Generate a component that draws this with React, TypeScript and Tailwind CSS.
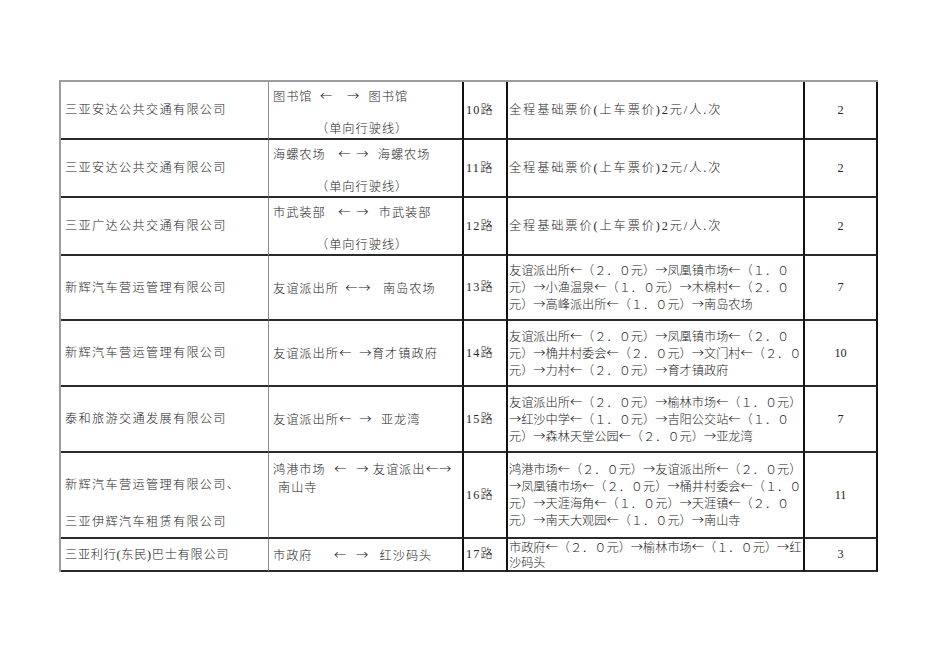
const serif = "font-['Liberation_Serif','Noto_Sans_CJK_SC',serif]";
const cjk = "font-['Noto_Sans_CJK_SC','Liberation_Serif',sans-serif]";

// route text: strings are text, numbers are gaps in px, '←' / '→' are arrow cells
type Part = string | number;

type Row = {
  company: string[];
  route: Part[][];
  routeTop: boolean;
  line: string;
  detail: string[];
  detailCjk: boolean;
  count: string;
};

const price = ['全程基础票价(上车票价)2元/人.次'];

const rows: Row[] = [
  { company: ['三亚安达公共交通有限公司'], route: [['图书馆', 7, '←', 14, '→', 9, '图书馆'], ['（单向行驶线）']], routeTop: true, line: '10路', detail: price, detailCjk: false, count: '2' },
  { company: ['三亚安达公共交通有限公司'], route: [['海螺农场', 12, '←', 5, '→', 9, '海螺农场'], ['（单向行驶线）']], routeTop: true, line: '11路', detail: price, detailCjk: false, count: '2' },
  { company: ['三亚广达公共交通有限公司'], route: [['市武装部', 12, '←', 5, '→', 10, '市武装部'], ['（单向行驶线）']], routeTop: true, line: '12路', detail: price, detailCjk: false, count: '2' },
  {
    company: ['新辉汽车营运管理有限公司'],
    route: [['友谊派出所', 6, '←', '→', 12, '南岛农场']],
    routeTop: false,
    line: '13路',
    detail: ['友谊派出所←（２．０元）→凤凰镇市场←（１．０', '元）→小渔温泉←（１．０元）→木棉村←（２．０', '元）→高峰派出所←（１．０元）→南岛农场'],
    detailCjk: true,
    count: '7',
  },
  {
    company: ['新辉汽车营运管理有限公司'],
    route: [['友谊派出所', '←', 7, '→', '育才镇政府']],
    routeTop: false,
    line: '14路',
    detail: ['友谊派出所←（２．０元）→凤凰镇市场←（２．０', '元）→桷井村委会←（２．０元）→文门村←（２．０', '元）→力村←（２．０元）→育才镇政府'],
    detailCjk: true,
    count: '10',
  },
  {
    company: ['泰和旅游交通发展有限公司'],
    route: [['友谊派出所', '←', 7, '→', 9, '亚龙湾']],
    routeTop: false,
    line: '15路',
    detail: ['友谊派出所←（２．０元）→榆林市场←（１．０元）', '→红沙中学←（１．０元）→吉阳公交站←（１．０', '元）→森林天堂公园←（２．０元）→亚龙湾'],
    detailCjk: true,
    count: '7',
  },
  {
    company: ['新辉汽车营运管理有限公司、', '三亚伊辉汽车租赁有限公司'],
    route: [['鸿港市场', 8, '←', 9, '→', 4, '友谊派出', '←', '→'], [5, '南山寺']],
    routeTop: true,
    line: '16路',
    detail: ['鸿港市场←（２．０元）→友谊派出所←（２．０元）', '→凤凰镇市场←（２．０元）→桶井村委会←（１．０', '元）→天涯海角←（１．０元）→天涯镇←（２．０', '元）→南天大观园←（１．０元）→南山寺'],
    detailCjk: true,
    count: '11',
  },
  {
    company: ['三亚利行(东民)巴士有限公司'],
    route: [['市政府', 21, '←', 9, '→', 11, '红沙码头']],
    routeTop: false,
    line: '17路',
    detail: ['市政府←（２．０元）→榆林市场←（１．０元）→红', '沙码头'],
    detailCjk: true,
    count: '3',
  },
];

const heights = ['h-[58px]', 'h-[58px]', 'h-[58px]', 'h-[65px]', 'h-[66px]', 'h-[66px]', 'h-[86px]', 'h-[33px]'];

function RouteLine({ parts, indent }: { parts: Part[]; indent: boolean }) {
  return (
    <div className={`flex items-center ${indent ? 'pl-[43px]' : ''}`}>
      {parts.map((p, k) => {
        if (typeof p === 'number') return <span key={k} className="inline-block shrink-0" style={{ width: p }} />;
        if (p === '←' || p === '→')
          return (
            <span key={k} className="inline-block w-[13px] shrink-0 text-center tracking-normal">
              {p}
            </span>
          );
        return <span key={k}>{p}</span>;
      })}
    </div>
  );
}

export default function App() {
  return (
    <div className="min-h-screen bg-white pt-[80px] pl-[59px] text-[12.2px] font-light text-[#262626]">
      <div className="grid w-[819px] grid-cols-[208px_195px_44px_297px_73px] border-t-2 border-l-2 border-[#9c9c9c]">
        {rows.map((r, i) => {
          const cell = `${heights[i]} border-b-2 border-b-[#2a2a2a]`;
          const twoLine = r.route.length > 1;
          const isMarket = i === 6;
          const last = i === 7;
          return (
            <div key={i} className="contents">
              {/* operator */}
              <div className={`${cell} border-r border-r-[#8c8c8c] ${serif} ${last ? 'tracking-[0.7px]' : 'tracking-[1.3px]'} leading-[16px] pl-[4px] flex flex-col ${r.company.length > 1 ? 'pt-[24px] gap-[21px]' : 'justify-center'} whitespace-nowrap`}>
                {r.company.map((t, j) => (
                  <div key={j}>{t}</div>
                ))}
              </div>
              {/* route ends */}
              <div className={`${cell} border-r-2 border-r-[#111] ${cjk} tracking-[1px] leading-[16px] pl-[4px] flex flex-col whitespace-nowrap ${twoLine ? (isMarket ? 'pt-[8px] gap-[2px]' : 'pt-[6px] gap-[16px]') : 'justify-center'}`}>
                {r.route.map((parts, j) => (
                  <RouteLine key={j} parts={parts} indent={j === 1 && !isMarket} />
                ))}
              </div>
              {/* line no. */}
              <div className={`${cell} border-r-2 border-r-[#111] ${serif} tracking-[1.2px] pl-[2px] flex items-center whitespace-nowrap`}>
                {r.line}
              </div>
              {/* stops & fares */}
              <div className={`${cell} border-r-2 border-r-[#111] pl-[1px] flex items-center`}>
                <p className={`whitespace-pre ${r.detailCjk ? `${cjk} ${last ? 'leading-[15px]' : 'leading-[17px]'}` : `${serif} tracking-[1.9px] leading-[16px]`}`}>
                  {r.detail.join('\n')}
                </p>
              </div>
              {/* vehicles */}
              <div className={`${cell} border-r-2 border-r-[#111] ${serif} flex items-center justify-center`}>
                {r.count}
              </div>
            </div>
          );
        })}
      </div>
    </div>
  );
}
